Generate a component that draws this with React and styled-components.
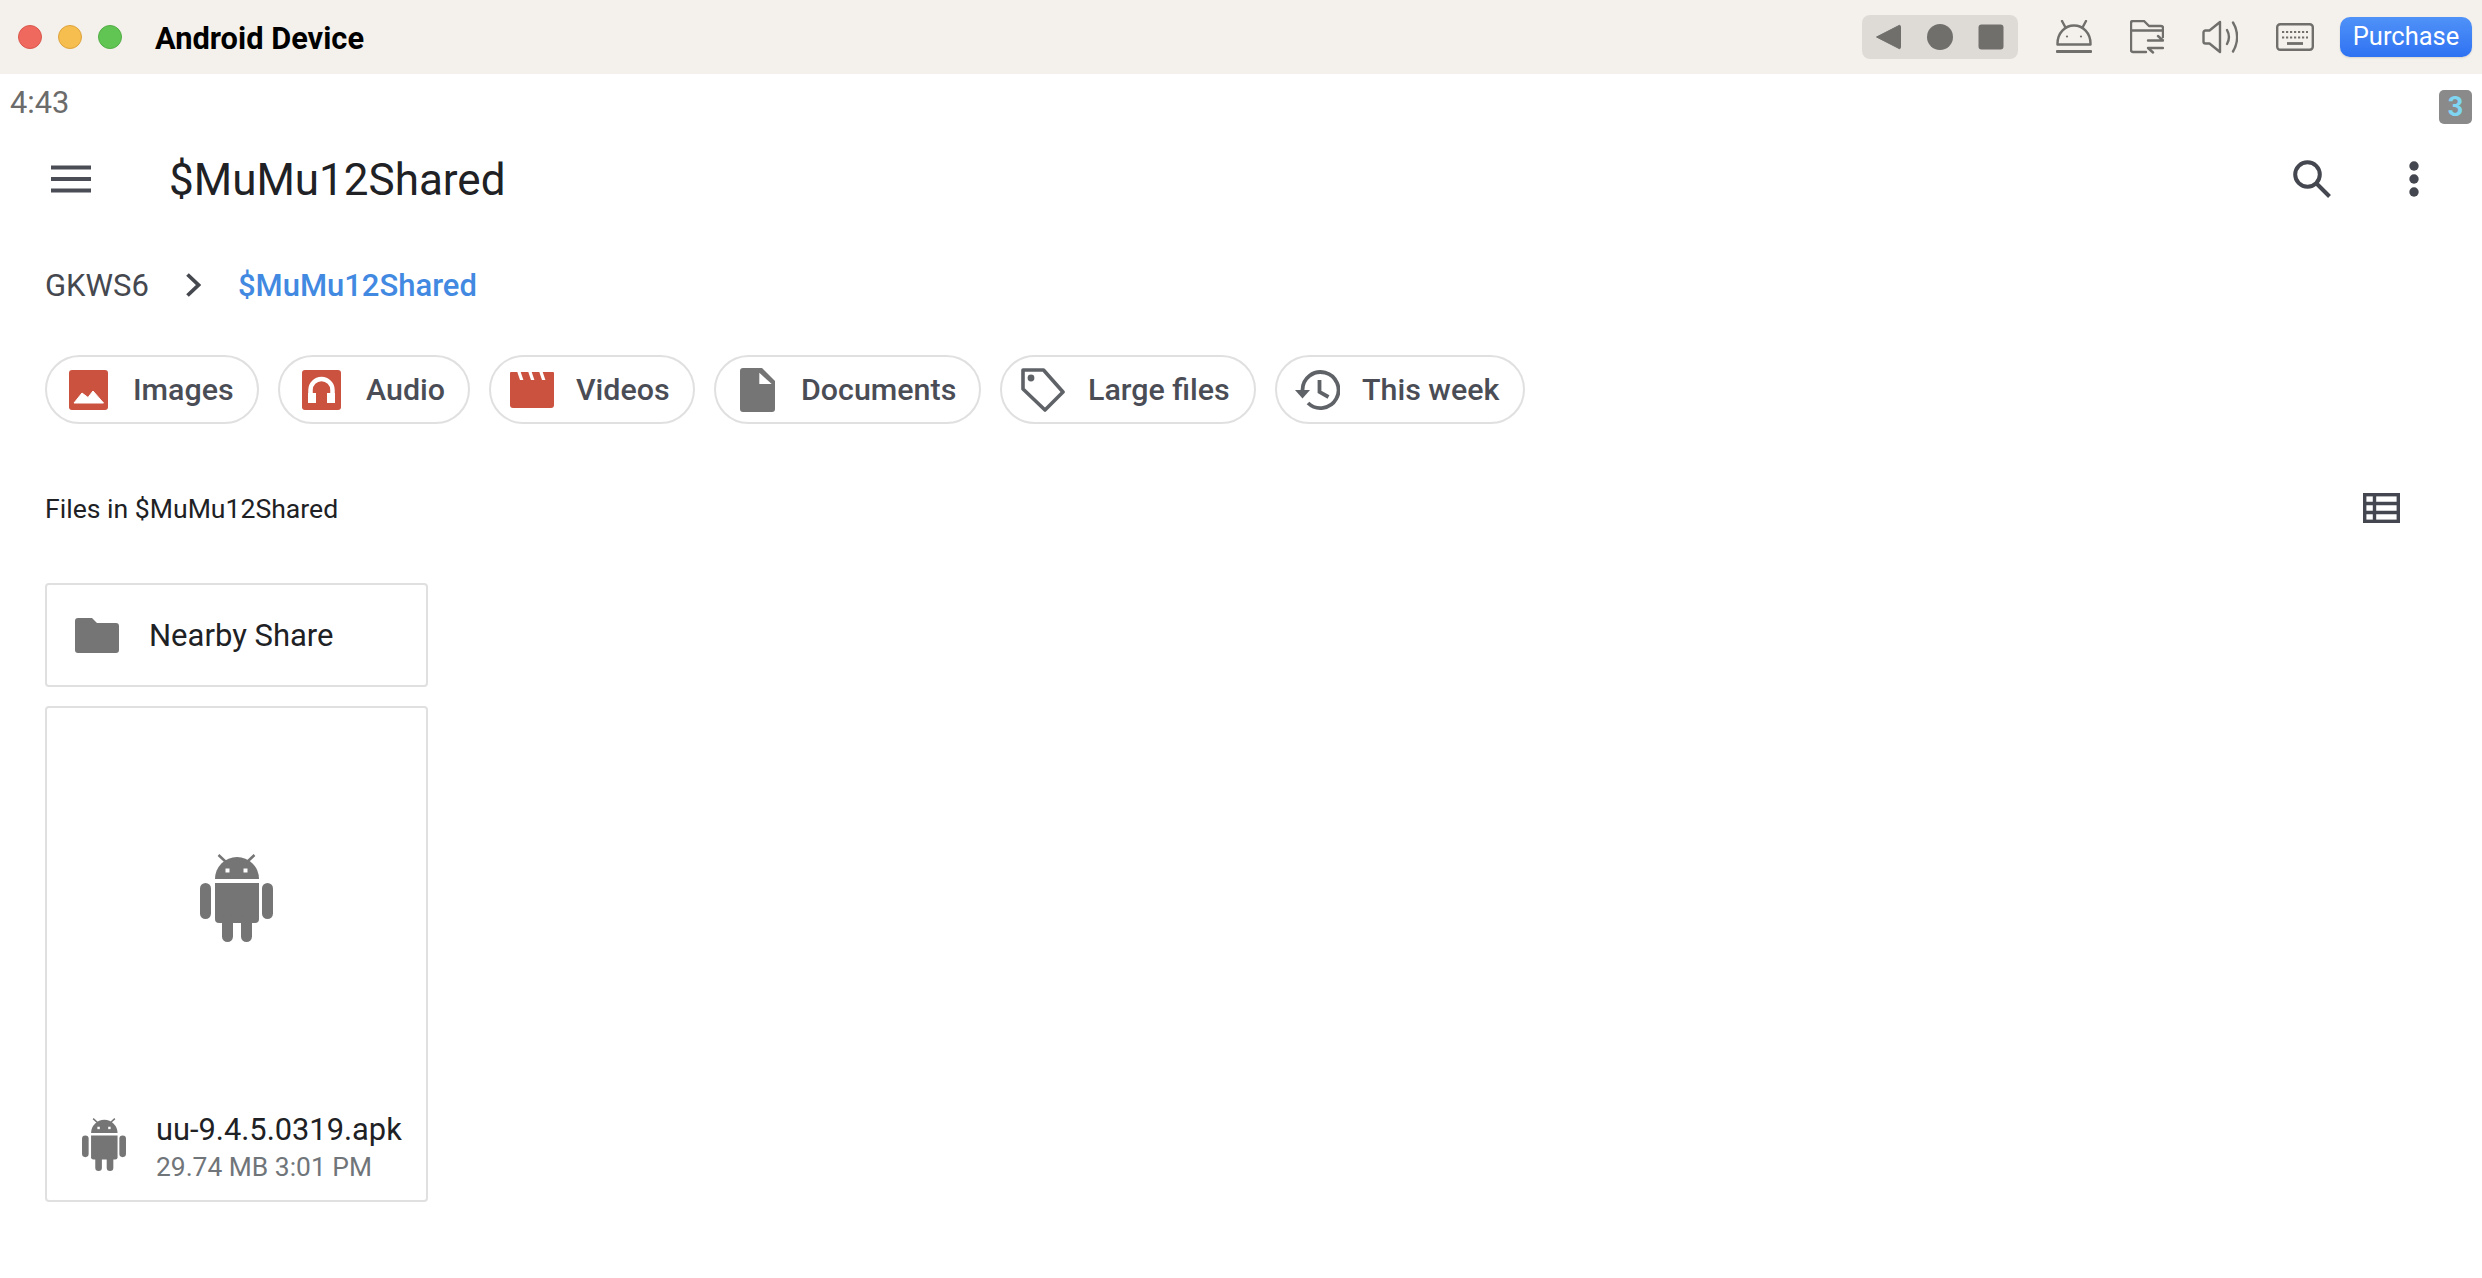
import React from 'react';
import styled, { createGlobalStyle } from 'styled-components';

const Global = createGlobalStyle`
  html, body { margin: 0; padding: 0; background: #fff; overflow: hidden; }
  body { font-family: Roboto, "Liberation Sans", sans-serif; }
`;
const Page = styled.div`width: 2482px; height: 1278px; display: flex; flex-direction: column; background: #fff;`;
const TitleBar = styled.header`height: 74px; background: #f4f1ec; display: flex; align-items: center; padding: 0 10px 0 18px; box-sizing: border-box; flex: none;`;
const Lights = styled.div`display: flex; gap: 16px; margin-right: 33px;`;
const Light = styled.span`width: 24px; height: 24px; border-radius: 50%; box-sizing: border-box; background: ${p => p.$c}; border: 1px solid ${p => p.$b};`;
const WinTitle = styled.div`font-size: 30.8px; font-weight: 700; color: #000; flex: 1; padding-top: 2px;`;
const NavGroup = styled.div`width: 156px; height: 44px; border-radius: 8px; background: #dedbd7; display: flex; align-items: center; justify-content: center; margin-right: 38px;`;
const Tools = styled.div`display: flex; align-items: center; gap: 38px; margin-right: 26px;`;
const Purchase = styled.button`width: 132px; height: 40px; border: 0; padding: 0 0 2px; border-radius: 10px; color: #fff; font: 400 25.5px Roboto, sans-serif; background: linear-gradient(#4f92f8, #2f72f2); box-shadow: 0 1px 2px rgba(0,0,0,.12);`;
const Screen = styled.main`flex: 1; display: flex; flex-direction: column; padding: 0 10px;`;
const StatusBar = styled.div`height: 52px; display: flex; justify-content: space-between; align-items: center; padding-top: 4px; box-sizing: border-box; flex: none;`;
const Time = styled.span`font-size: 30.8px; color: #6b6b6b;`;
const Badge = styled.span`width: 33px; height: 34px; margin-top: 10px; border-radius: 5px; background: #8a8a8a; color: #7fd6f2; font: 700 27px Roboto, sans-serif; display: flex; align-items: center; justify-content: center;`;
const Toolbar = styled.div`height: 84px; margin-top: 11px; display: flex; align-items: center; padding: 0 53px 0 41px; flex: none;`;
const PageTitle = styled.h1`flex: 1; margin: 0 0 0 78px; padding-top: 2px; font-size: 44px; font-weight: 400; color: #202124;`;
const ToolbarActions = styled.div`display: flex; align-items: center; gap: 78px;`;
const Crumbs = styled.nav`display: flex; align-items: center; gap: 37px; height: 60px; margin: 34px 0 0 35px; font-size: 31px; flex: none;`;
const Crumb = styled.span`color: ${p => p.$active ? '#4289e2' : '#45484f'}; font-weight: ${p => p.$active ? 500 : 400};`;
const Chips = styled.div`display: flex; gap: 19px; margin: 40px 0 0 35px; flex: none;`;
const Chip = styled.div`height: 69px; width: ${p => p.$w}px; box-sizing: border-box; border: 2px solid #e0e0e0; border-radius: 35px; display: flex; align-items: center; padding-left: ${p => p.$pl}px; font-size: 30.4px; font-weight: 500; color: #4a4d55;`;
const ChipIcon = styled.span`display: flex; margin-right: ${p => p.$mr}px;`;
const SectionRow = styled.div`display: flex; justify-content: space-between; align-items: center; margin: 64px 0 0 35px; height: 40px; padding-right: 72px; flex: none;`;
const SectionLabel = styled.span`font-size: 26.6px; color: #202124;`;
const Card = styled.div`width: 383px; box-sizing: border-box; border: 2px solid #e0e0e0; border-radius: 4px; margin-left: 35px; flex: none;`;
const FolderCard = styled(Card)`height: 104px; margin-top: 55px; display: flex; align-items: center; padding-left: 28px; font-size: 31px; color: #202124; gap: 30px;`;
const FileCard = styled(Card)`height: 496px; margin-top: 19px; display: flex; flex-direction: column;`;
const Preview = styled.div`height: 380px; display: flex; align-items: center; justify-content: center; flex: none;`;
const FileRow = styled.div`height: 117px; display: flex; align-items: center; padding-left: 35px; gap: 30px;`;
const FileText = styled.div`padding-top: 7px;`;
const FileName = styled.div`font-size: 30.8px; color: #202124; line-height: 38px;`;
const FileMeta = styled.div`font-size: 26.4px; color: #70757a; line-height: 36px;`;

const Back = () => <svg width="52" height="30" viewBox="0 0 52 30"><path d="M13.500 15 36 3.500a1 1 0 0 1 1.500 1v21a1 1 0 0 1-1.500 1z" fill="#706f6c" stroke="#706f6c" strokeLinejoin="round"/></svg>;
const Dot = () => <svg width="50" height="30" viewBox="0 0 50 30"><circle cx="25" cy="15" r="13" fill="#706f6c"/></svg>;
const Stop = () => <svg width="52" height="30" viewBox="0 0 52 30"><rect x="13.500" y="2.500" width="25" height="25" rx="3" fill="#706f6c"/></svg>;

const ic = { fill: 'none', stroke: '#706f6c', strokeWidth: 2.4, strokeLinecap: 'round', strokeLinejoin: 'round' };
const BarAndroid = () => <svg width="36" height="34" viewBox="0 0 36 34" {...ic}><path d="M1.500 24.500v-1C1.500 13 9 5.500 18 5.500s16.500 7.500 16.500 18v1z"/><path d="M6 1l3.500 6.500M30 1l-3.500 6.500"/><path d="M1 31.500h34" strokeWidth="2.800"/><circle cx="11" cy="16.500" r="1.100" fill="#706f6c" stroke="none"/><circle cx="25" cy="16.500" r="1.100" fill="#706f6c" stroke="none"/></svg>;
const BarFolder = () => <svg width="34" height="34" viewBox="0 0 34 34" {...ic}><path d="M16 32H3a2 2 0 0 1-2-2V3a2 2 0 0 1 2-2h11l5 5h12a2 2 0 0 1 2 2v9"/><path d="M1.500 10.500h31.500"/><path d="M18 20.500h15l-5-4.500M33 28H18l5 4.500"/></svg>;
const BarSpeaker = () => <svg width="36" height="34" viewBox="0 0 36 34" {...ic}><path d="M18 2 7.500 10.500H3.500a2 2 0 0 0-2 2v9a2 2 0 0 0 2 2h4L18 32z"/><path d="M25 10c2.500 4.500 2.500 9.500 0 14M31 2.500c5.500 9 5.500 20 0 29"/></svg>;
const BarKeyboard = () => <svg width="38" height="28" viewBox="0 0 38 28" fill="none"><rect x="1.200" y="1.200" width="35.600" height="25.600" rx="3" stroke="#706f6c" strokeWidth="2.400"/><path d="M6 9h26M6 14.500h26" stroke="#706f6c" strokeWidth="2.200" strokeDasharray="2.200 1.800"/><path d="M11 20.500h16" stroke="#706f6c" strokeWidth="2.800"/></svg>;

const Menu = () => <svg width="40" height="28" viewBox="0 0 40 28"><path d="M0 2.500h40M0 14h40M0 25.500h40" stroke="#4a4d55" strokeWidth="4"/></svg>;
const Search = () => <svg width="38" height="38" viewBox="0 0 38 38" fill="none" stroke="#44474f" strokeWidth="4"><circle cx="14.500" cy="14.500" r="12.300"/><path d="M23 23l13.500 13.500"/></svg>;
const More = () => <svg width="10" height="36" viewBox="0 0 10 36" fill="#44474f"><circle cx="5" cy="5" r="4.700"/><circle cx="5" cy="18" r="4.700"/><circle cx="5" cy="31" r="4.700"/></svg>;
const Chevron = () => <svg width="15" height="24" viewBox="0 0 15 24" fill="none" stroke="#45484f" strokeWidth="3.800"><path d="M1.500 1.500 12.500 12 1.500 22.500"/></svg>;
const Grid = () => <svg width="37" height="30" viewBox="0 0 37 30" fill="none" stroke="#44474f" strokeWidth="3.400"><rect x="1.700" y="1.700" width="33.600" height="26.600"/><path d="M1.700 10.500h33.600M1.700 19.500h33.600M11.500 1.700v26.600"/></svg>;

const ImagesIcon = () => <svg width="39" height="40" viewBox="0 0 39 40"><rect width="39" height="40" rx="3" fill="#cc5240"/><path d="M5 33 13 23l6 4.500L24 21l10.500 12z" fill="#fff" stroke="#fff" strokeLinejoin="round"/></svg>;
const AudioIcon = () => <svg width="39" height="40" viewBox="0 0 39 40"><rect width="39" height="40" rx="3" fill="#cc5240"/><path d="M8.500 24v-4a11 11 0 0 1 22 0v4" fill="none" stroke="#fff" strokeWidth="4.500"/><rect x="6" y="23" width="8" height="10" fill="#fff"/><rect x="25" y="23" width="8" height="10" fill="#fff"/></svg>;
const VideosIcon = () => <svg width="44" height="36" viewBox="0 0 44 36"><path d="M0 1a1 1 0 0 1 1-1h42a1 1 0 0 1 1 1v32a3 3 0 0 1-3 3H3a3 3 0 0 1-3-3z" fill="#cc5240"/><path d="M7.300 0h3.400l2.700 8H10zM18.300 0h3.400l2.700 8H21zM29.300 0h3.400l2.700 8H32z" fill="#fff"/></svg>;
const DocIcon = () => <svg width="35" height="44" viewBox="0 0 35 44"><path d="M3 0H22L35 13V41a3 3 0 0 1-3 3H3a3 3 0 0 1-3-3V3a3 3 0 0 1 3-3z" fill="#757575"/><path d="M19.300 4.700V16H31.700z" fill="#fff"/></svg>;
const TagIcon = () => <svg width="44" height="44" viewBox="0 0 44 44" fill="none" stroke="#5f6368" strokeWidth="3.600" strokeLinejoin="round"><path d="M2 2H22.500L42 24 24 42 2 21z"/><circle cx="10" cy="10" r="3.400" fill="#5f6368" stroke="none"/></svg>;
const HistoryIcon = () => <svg width="45" height="40" viewBox="0 0 45 40" fill="none" stroke="#5f6368" strokeWidth="3.800"><path d="M7.500 20A18 18 0 1 1 13 33"/><path d="M0 20h15l-7.500 8.500z" fill="#5f6368" stroke="none"/><path d="M24.500 10v12l9 5"/></svg>;
const FolderIcon = () => <svg width="44" height="35" viewBox="0 0 44 35"><path d="M3 0h14l5 5h19a3 3 0 0 1 3 3v24a3 3 0 0 1-3 3H3a3 3 0 0 1-3-3V3a3 3 0 0 1 3-3z" fill="#757575"/></svg>;
const Android = ({ w, h }) => (
  <svg width={w} height={h} viewBox="0 0 73 88" fill="#757575">
    <rect x="0" y="29" width="11" height="36" rx="5.500" />
    <rect x="62" y="29" width="11" height="36" rx="5.500" />
    <path d="M15 29H59V65a4 4 0 0 1-4 4H19a4 4 0 0 1-4-4z" />
    <rect x="22" y="60" width="11" height="28" rx="5.500" />
    <rect x="41" y="60" width="11" height="28" rx="5.500" />
    <path d="M15 25a22 22 0 0 1 44 0z" />
    <path d="M18.500 1 26 8M54.500 1 47 8" stroke="#757575" strokeWidth="2.500" />
    <rect x="25.500" y="14.500" width="4" height="4" fill="#fff" />
    <rect x="43.500" y="14.500" width="4" height="4" fill="#fff" />
  </svg>
);

const chips = [
  { l: 'Images', i: <ImagesIcon />, w: 214, pl: 22, mr: 25 },
  { l: 'Audio', i: <AudioIcon />, w: 192, pl: 22, mr: 25 },
  { l: 'Videos', i: <VideosIcon />, w: 206, pl: 19, mr: 22 },
  { l: 'Documents', i: <DocIcon />, w: 267, pl: 24, mr: 26 },
  { l: 'Large files', i: <TagIcon />, w: 256, pl: 19, mr: 23 },
  { l: 'This week', i: <HistoryIcon />, w: 250, pl: 18, mr: 22 },
];

export default function App() {
  return (
    <Page>
      <Global />
      <TitleBar>
        <Lights>
          <Light $c="#f0695e" $b="#d9574c" />
          <Light $c="#f6bd4f" $b="#dea33c" />
          <Light $c="#61c554" $b="#52ad45" />
        </Lights>
        <WinTitle>Android Device</WinTitle>
        <NavGroup><Back /><Dot /><Stop /></NavGroup>
        <Tools><BarAndroid /><BarFolder /><BarSpeaker /><BarKeyboard /></Tools>
        <Purchase>Purchase</Purchase>
      </TitleBar>
      <Screen>
        <StatusBar><Time>4:43</Time><Badge>3</Badge></StatusBar>
        <Toolbar>
          <Menu />
          <PageTitle>$MuMu12Shared</PageTitle>
          <ToolbarActions><Search /><More /></ToolbarActions>
        </Toolbar>
        <Crumbs><Crumb>GKWS6</Crumb><Chevron /><Crumb $active>$MuMu12Shared</Crumb></Crumbs>
        <Chips>
          {chips.map(c => <Chip key={c.l} $w={c.w} $pl={c.pl}><ChipIcon $mr={c.mr}>{c.i}</ChipIcon>{c.l}</Chip>)}
        </Chips>
        <SectionRow><SectionLabel>Files in $MuMu12Shared</SectionLabel><Grid /></SectionRow>
        <FolderCard><FolderIcon />Nearby Share</FolderCard>
        <FileCard>
          <Preview><Android w={73} h={88} /></Preview>
          <FileRow>
            <Android w={44} h={53} />
            <FileText><FileName>uu-9.4.5.0319.apk</FileName><FileMeta>29.74 MB 3:01 PM</FileMeta></FileText>
          </FileRow>
        </FileCard>
      </Screen>
    </Page>
  );
}
